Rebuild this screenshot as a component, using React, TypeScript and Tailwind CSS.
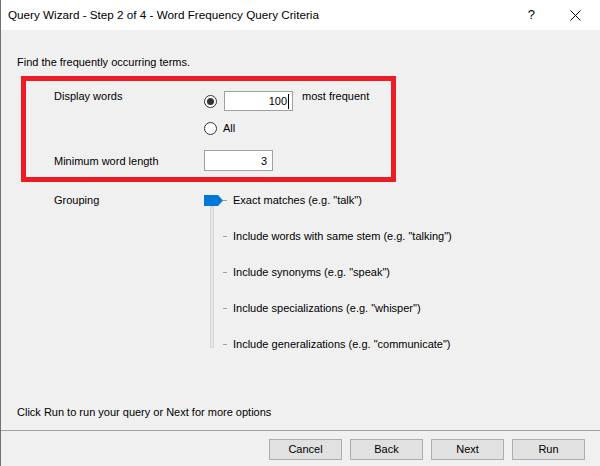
import React from "react";

const font = { fontFamily: '"Liberation Sans", Arial, sans-serif' };

function Radio({ checked }: { checked?: boolean }) {
  return (
    <span className="flex h-[13px] w-[13px] items-center justify-center rounded-full border border-[#333333] bg-white">
      {checked && <span className="h-[7px] w-[7px] rounded-full bg-[#333333]" />}
    </span>
  );
}

function Btn({ label }: { label: string }) {
  return (
    <div className="flex h-[21px] w-[73px] items-center justify-center border border-[#adadad] bg-[#e1e1e1] text-[11px] text-black">
      {label}
    </div>
  );
}

const items = [
  'Exact matches (e.g. "talk")',
  'Include words with same stem (e.g. "talking")',
  'Include synonyms (e.g. "speak")',
  'Include specializations (e.g. "whisper")',
  'Include generalizations (e.g. "communicate")',
];

export default function App() {
  return (
    <div
      className="flex h-[466px] w-[600px] flex-col overflow-hidden border-l border-[#707070] bg-[#f0f0f0] text-[11px] text-black"
      style={font}
    >
      {/* title bar */}
      <div className="flex h-[30px] shrink-0 items-center bg-white pl-[7px]">
        <span className="text-[11.7px] leading-[16px]">Query Wizard - Step 2 of 4 - Word Frequency Query Criteria</span>
        <span className="ml-auto mr-[35px] text-[13px]">?</span>
        <svg width="11" height="11" viewBox="0 0 11 11" className="mr-[19px]">
          <path d="M0.5 0.5 L10.5 10.5 M10.5 0.5 L0.5 10.5" stroke="#000" strokeWidth="1" fill="none" />
        </svg>
      </div>

      {/* body */}
      <div className="flex flex-1 flex-col">
        <div className="mt-[24px] pl-[16px] leading-[16px]">Find the frequently occurring terms.</div>

        {/* red box */}
        <div className="ml-[20px] mt-[6px] h-[106px] w-[375px] border-[5px] border-[#ed1c24] pl-[28px]">
          {/* row 1 */}
          <div className="mt-[10px] flex h-[20px] items-center">
            <div className="w-[150px] self-start -mt-[3px] leading-[16px]">Display words</div>
            <Radio checked />
            <div className="ml-[7px] flex h-[20px] w-[69px] items-center justify-end border border-[#a0a0a0] bg-white pr-[3px]">
              <span className="leading-[16px]">100</span>
              <span className="ml-[1px] h-[15px] w-[1px] bg-black" />
            </div>
            <div className="ml-[9px] self-start -mt-[3px] leading-[16px]">most frequent</div>
          </div>
          {/* row 2 */}
          <div className="mt-[7px] flex h-[20px] items-center">
            <div className="w-[150px]" />
            <Radio />
            <span className="ml-[6px] leading-[16px]">All</span>
          </div>
          {/* row 3 */}
          <div className="mt-[12px] flex h-[21px] items-center">
            <div className="w-[150px] leading-[16px]">Minimum word length</div>
            <div className="flex h-[21px] w-[69px] items-center justify-end border border-[#a0a0a0] bg-white pr-[5px]">
              <span className="leading-[16px]">3</span>
            </div>
          </div>
        </div>

        {/* grouping */}
        <div className="flex pl-[53px]">
          <div className="flex h-[36px] w-[150px] items-center leading-[16px]">Grouping</div>
          <div className="relative flex flex-col">
            {/* track */}
            <div className="absolute left-[6px] top-[24px] h-[142px] w-[4px] border border-[#d6d6d6] bg-[#e7e7e7]" />
            {/* thumb */}
            <svg className="absolute left-0 top-[13px]" width="20" height="12" viewBox="0 0 20 12">
              <path d="M0 0 H14 L19 5.5 L14 11 H0 Z" fill="#0078d7" />
            </svg>
            {items.map((t) => (
              <div key={t} className="flex h-[36px] items-center">
                <span className="w-[19px]" />
                <span className="h-[1px] w-[4px] bg-[#a0a0a0]" />
                <span className="ml-[6px] leading-[16px]">{t}</span>
              </div>
            ))}
          </div>
        </div>

        <div className="mt-[42px] pl-[16px] leading-[16px]">Click Run to run your query or Next for more options</div>
        <div className="mt-[10px] h-[1px] bg-[#a0a0a0]" />
        <div className="mt-[8px] flex gap-[8px] pl-[268px]">
          <Btn label="Cancel" />
          <Btn label="Back" />
          <Btn label="Next" />
          <Btn label="Run" />
        </div>
      </div>
    </div>
  );
}
